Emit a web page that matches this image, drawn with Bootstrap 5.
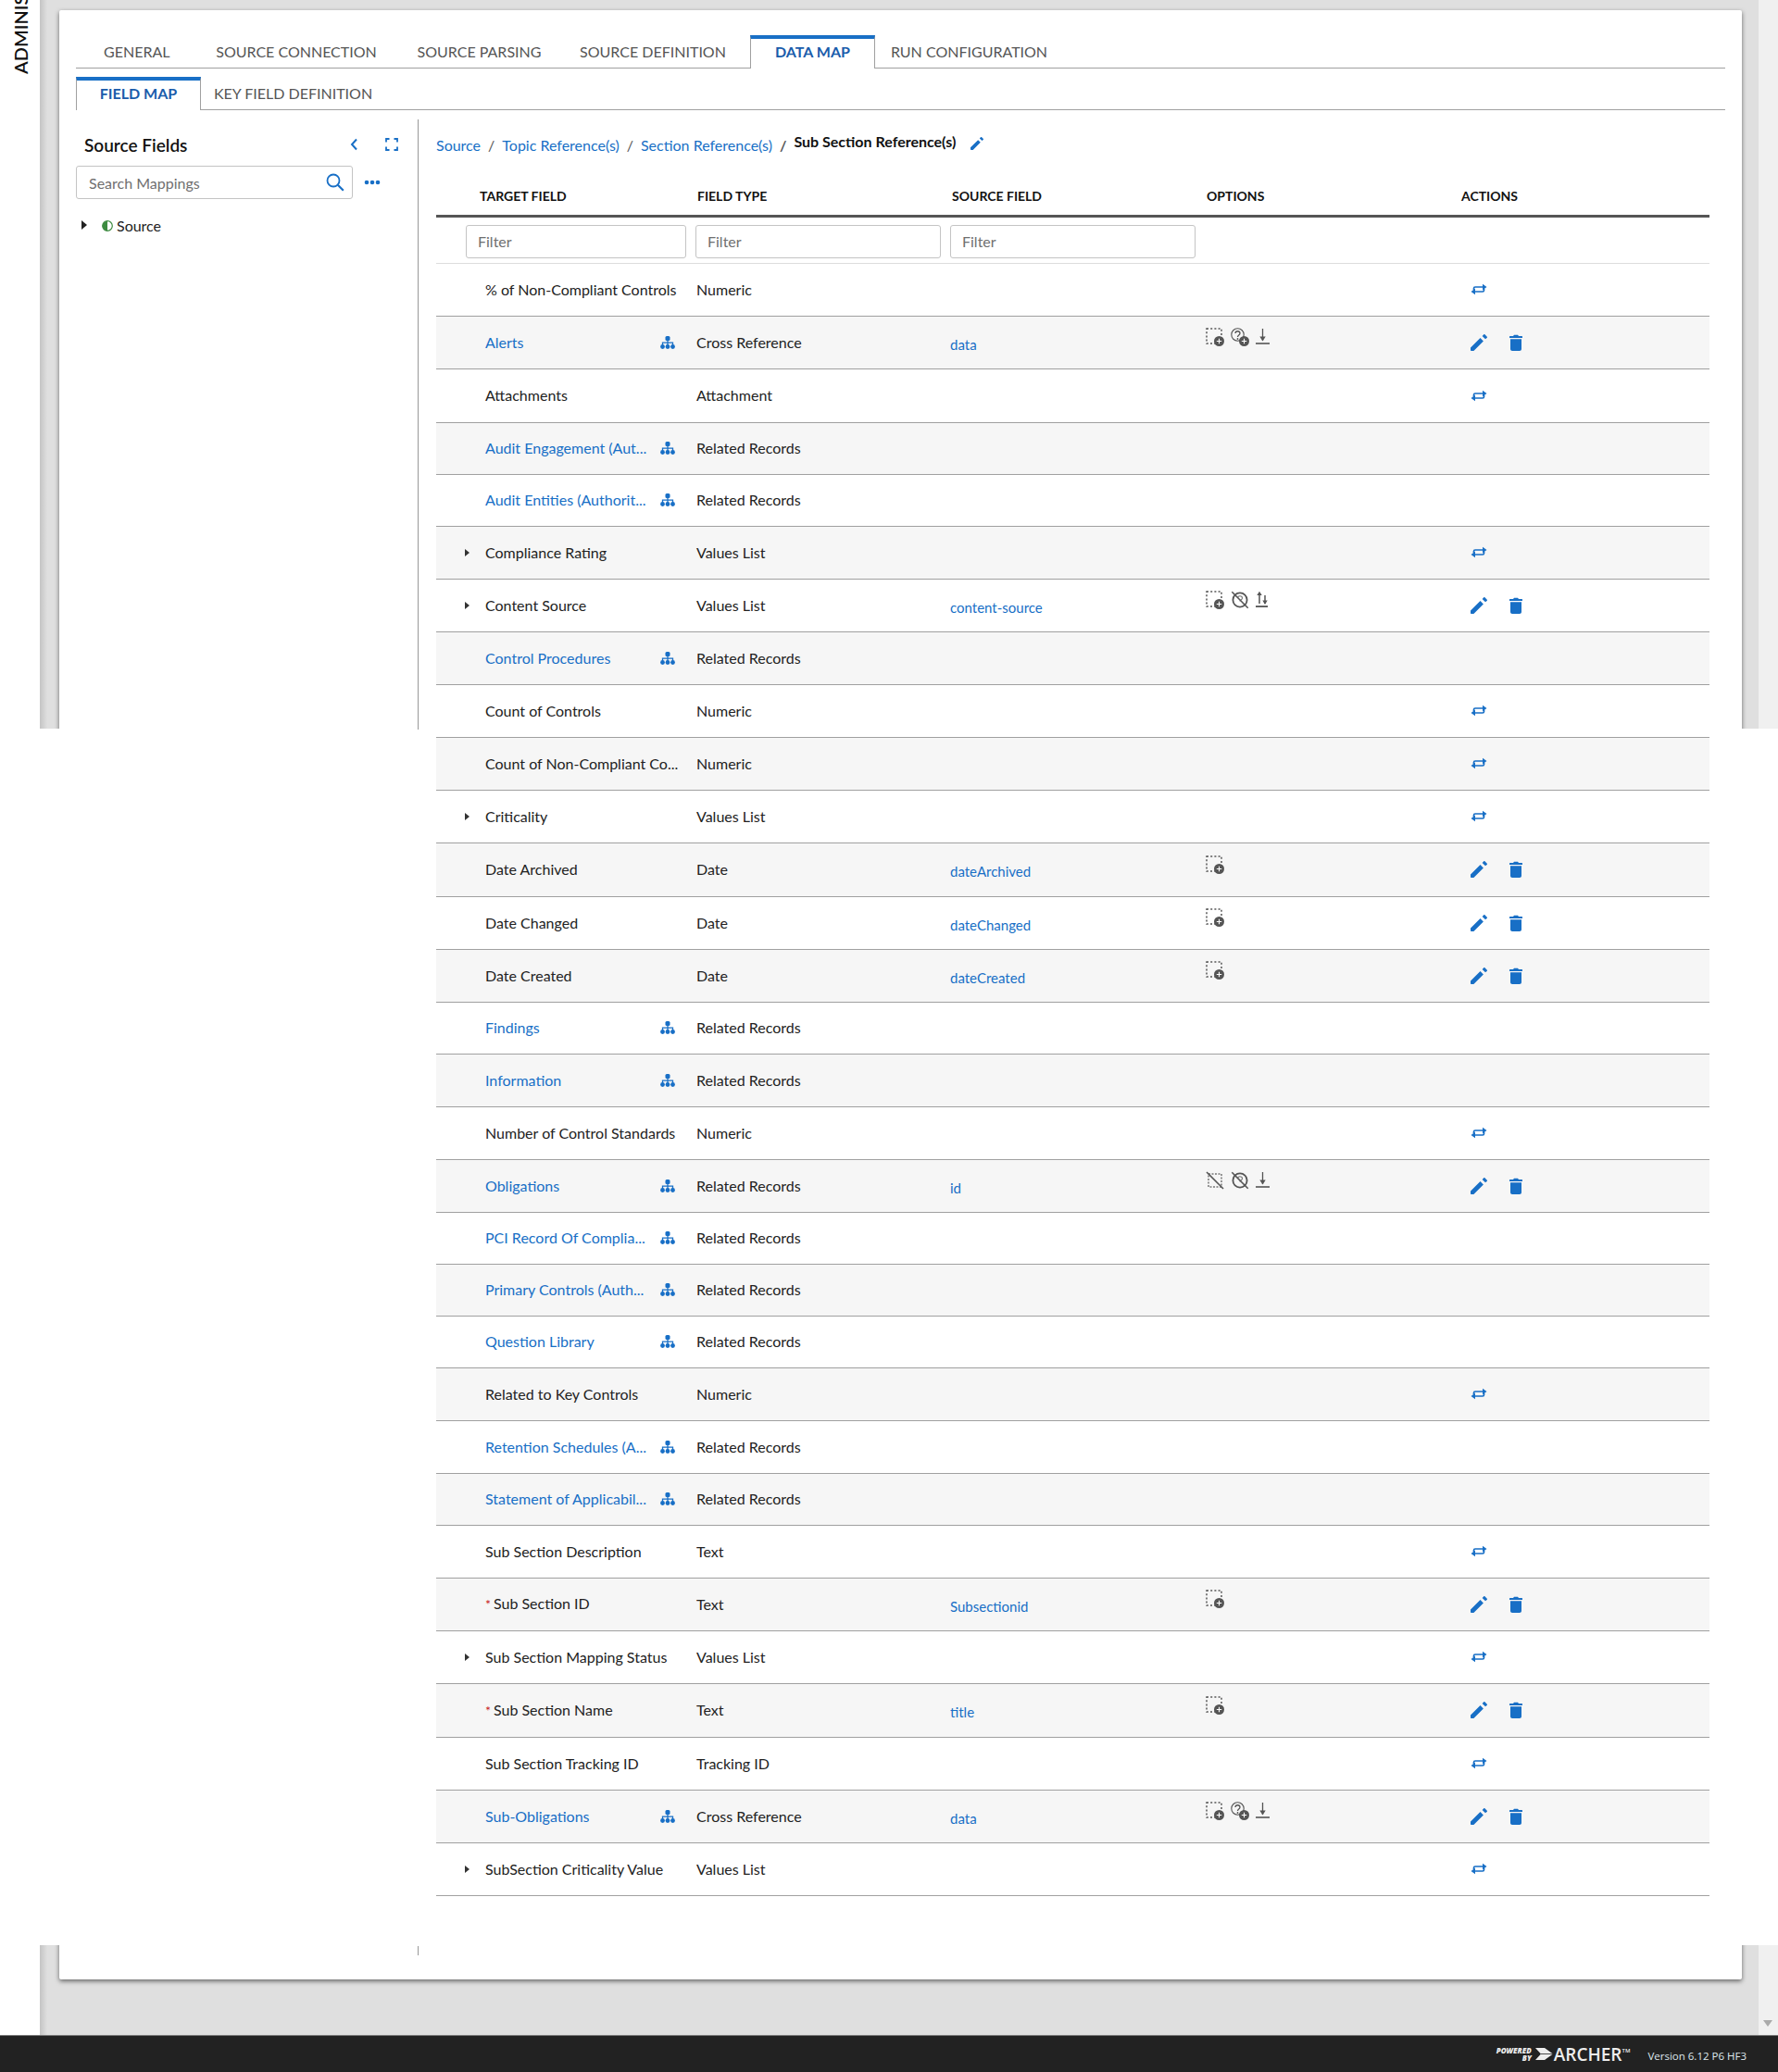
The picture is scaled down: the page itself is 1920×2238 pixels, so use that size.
<!DOCTYPE html>
<html lang="en">
<head>
<meta charset="utf-8">
<title>Data Map</title>
<link href="https://cdn.jsdelivr.net/npm/bootstrap@5.3.0/dist/css/bootstrap.min.css" rel="stylesheet">
<script src="https://cdn.jsdelivr.net/npm/bootstrap@5.3.0/dist/js/bootstrap.bundle.min.js"></script>
<style>
:root{--blue:#186fc6;--line:#a0a0a0;}
html,body{height:2238px;overflow:hidden;}
body{font-family:Lato,"Liberation Sans",sans-serif;font-size:16px;color:#222;background:#fff;}
.app-shell{height:2198px;}
.rail{width:43px;background:#fff;overflow:hidden;flex:none;}
.rail-label{height:80px;writing-mode:vertical-rl;transform:rotate(180deg);white-space:nowrap;font-size:20px;font-weight:600;color:#111;line-height:44px;width:44px;}
.stage{flex:1;min-width:0;padding:11px 18px 60px 21px;
 background:linear-gradient(#fff,#fff) 0 787px/100% 1314px no-repeat,
 linear-gradient(90deg,#c4c4c4,#dfdfdf) 0 0/8px 100% no-repeat,#dfdfdf;}
.gutter{width:21px;flex:none;padding:0 0 9px 5px;
 background:linear-gradient(#fff,#fff) 0 787px/100% 1314px no-repeat,#f0f0f0;}
.gutter-arrow{width:0;height:0;border:5px solid transparent;border-top:7px solid #aaa;border-bottom:0;}
.sheet{height:2127px;background:#fff;padding:27px 18px 0;border-radius:2px;
 box-shadow:0 2px 5px rgba(0,0,0,.55);
 clip-path:polygon(-20px -20px,calc(100% + 20px) -20px,calc(100% + 20px) 776px,100% 776px,100% 2090px,calc(100% + 20px) 2090px,calc(100% + 20px) calc(100% + 20px),-20px calc(100% + 20px),-20px 2090px,0 2090px,0 776px,-20px 776px);}
.tabs-a,.tabs-b{border-bottom:1px solid var(--line);--bs-nav-tabs-border-width:0;flex-wrap:nowrap;}
.tabs-a{height:36px;}
.tabs-b{height:36px;margin-top:9px;}
.tab-x{font-size:16px;height:35px;line-height:35px;white-space:nowrap;text-align:center;display:block;}
.tabs-a .nav-link,.tabs-b .nav-link{color:#555;border:0;margin:0;border-radius:0;padding:0;}
.tabs-a .nav-link.active,.tabs-b .nav-link.active{color:#1a5cab;font-weight:700;border-top:4px solid var(--blue);border-left:1px solid var(--line);border-right:1px solid var(--line);background:#fff;height:36px;margin-bottom:-1px;line-height:27px;padding:0;}
.tabs-a .nav-link.t1{width:127px;padding-left:30px;text-align:left;}
.tabs-a .nav-link.t2{width:219px;padding-left:3px;}
.tabs-a .nav-link.t3{width:177px;padding-left:2px;}
.tabs-a .nav-link.t4{width:205px;padding-right:5px;}
.t5{width:135px;}
.tabs-a .nav-link.t6{width:215px;padding-right:12px;}
.wb1{width:135px;}
.tabs-b .nav-link.wb2{width:200px;padding-left:14px;text-align:left;}
.panes{margin-top:10px;height:1983px;}
.pane-l{width:370px;flex:none;padding-right:26px;
 background:linear-gradient(#999,#999) 100% 0/1px 659px no-repeat,linear-gradient(#999,#999) 100% 1973px/1px 10px no-repeat;}
.pane-r{flex:1;min-width:0;padding:0 18px 0 19px;}
.pane-head{height:50px;padding:16px 0 0 9px;}
.pane-title{font-size:19px;font-weight:600;color:#111;line-height:24px;}
.head-tools{gap:30px;margin-right:-4px;}
.search-row{gap:12px;}
.search-wrap{width:299px;}
.search-wrap .form-control{height:36px;border-color:#c4c4c4;border-radius:3px;font-size:16px;padding:0 13px;color:#222;}
.search-wrap .form-control::placeholder,.filter-input::placeholder{color:#6f6f6f;opacity:1;}
.search-glass{position:absolute;right:9px;top:8px;}
.tree-row{margin-top:17px;padding-left:6px;height:24px;}
.caret-tree{width:0;height:0;border-left:6px solid #222;border-top:5px solid transparent;border-bottom:5px solid transparent;margin-top:-2px;}
.crumbs{height:62px;padding-top:16px;line-height:24px;--bs-breadcrumb-divider-color:#555;--bs-breadcrumb-margin-bottom:0;--bs-breadcrumb-item-padding-x:8px;font-size:16px;margin:0;flex-wrap:nowrap;white-space:nowrap;}
.crumbs .breadcrumb-item a{color:var(--blue);text-decoration:none;}
.crumbs .breadcrumb-item.active{color:#111;font-weight:700;margin-top:-4px;}
.crumbs .breadcrumb-item.active::before{margin-top:4px;}
.fm-table{table-layout:fixed;width:1375px;margin:0;border-collapse:collapse;--bs-table-bg:transparent;}
.fm-table col.c1{width:276px}.fm-table col.c2,.fm-table col.c3,.fm-table col.c4{width:275px}.fm-table col.c5{width:274px}
.fm-table th{height:42px;font-size:14px;font-weight:700;color:#111;padding:0 0 0 6px;vertical-align:middle;border-bottom:3px solid #555;text-transform:uppercase;}
.fm-table th:first-child{padding-left:47px;}
.fm-table .filter-row td{height:51px;padding:0 6px 0 4px;border-bottom:1px solid #ddd;vertical-align:top;}
.fm-table .filter-row td:first-child{padding-left:32px;}
.filter-input{height:36px;margin-top:8px;border-color:#c4c4c4;border-radius:3px;font-size:16px;padding:0 12px;}
.fm-table tbody.rows td{height:57px;padding:0 0 0 5px;vertical-align:middle;border-bottom:1px solid var(--line);font-size:16px;color:#222;line-height:20px;box-shadow:none;}
.fm-table tbody.rows tr:nth-child(even) td{background:#f6f6f6;}
.fm-table tbody.rows tr.h56 td{height:56px;}
.fm-table tbody.rows tr.h58 td{height:58px;}
.fm-table tbody.rows td.t-cell{padding:0 18px 0 53px;position:relative;white-space:nowrap;}
.fm-table tbody.rows td.s-cell{padding:4px 0 0 4px;font-size:15px;}
.fm-table tbody.rows td.o-cell{padding:0 0 11px 5px;}
.fm-table tbody.rows td.a-cell{padding-left:16px;}
.a-cell>svg{display:block;}
.fm-link{color:var(--blue);text-decoration:none;}
.t-inner{display:flex;align-items:center;justify-content:space-between;white-space:nowrap;}
.caret-mark{width:0;height:0;border-left:5px solid #333;border-top:4px solid transparent;border-bottom:4px solid transparent;position:absolute;left:31px;top:50%;margin-top:-4px;}
.req-mark{color:#c8201f;font-size:14px;margin-right:3px;}
.opt-row{gap:7px;align-items:center;line-height:0;}
.act-row{gap:24px;align-items:center;line-height:0;}
.foot{height:40px;background:#222;color:#dfe8ee;padding-right:34px;border-top:1px solid #777;}
.powered{font-size:8px;line-height:7.5px;font-style:italic;font-weight:800;text-align:right;color:#eee;font-family:"Open Sans",sans-serif;}
.brand{font-size:19px;font-weight:600;color:#eee;font-family:"Open Sans",sans-serif;line-height:24px;margin:0 19px 0 1px;}
.brand sup{font-size:6px;top:-1.5em;}
.ver{font-family:"Open Sans",sans-serif;font-size:11.500px;padding-top:5px;}
</style>
</head>
<body>
<svg width="0" height="0" class="d-block" aria-hidden="true" style="position:absolute">
 <defs>
  <symbol id="i-pen" viewBox="0 0 18 18"><path fill="#186fc6" d="M0 14.6V17c0 .6.4 1 1 1h2.4L13.9 7.5 10.5 4.1 0 14.6zM17.6 3.9c.5-.4.5-1 0-1.500L15.600.4c-.5-.5-1.100-.5-1.500 0l-1.500 1.500 3.400 3.400 1.600-1.400z"/></symbol>
  <symbol id="i-bin" viewBox="0 0 14 18"><path fill="#186fc6" d="M5 .7h4l1 1.300h3.500c.3 0 .5.2.5.5V4H0V2.500c0-.3.2-.5.5-.5H4zM1 5.200h12V16c0 1.100-.9 2-2 2H3c-1.100 0-2-.9-2-2z"/></symbol>
  <symbol id="i-swap" viewBox="0 0 18 13"><g fill="none" stroke="#186fc6" stroke-width="1.700"><path d="M3.500 7.300V5.500Q3.500 4 5 4H14"/><path d="M14.500 5.700V7.500Q14.500 9 13 9H4"/></g><path fill="#186fc6" d="M13 .8 17.500 4 13 7.200zM5 5.800.5 9 5 12.200z"/></symbol>
  <symbol id="i-tree" viewBox="0 0 16 14"><g fill="#186fc6"><rect x="5.500" y="0" width="5" height="5" rx="1.500"/><circle cx="2.500" cy="11.500" r="2.400"/><circle cx="8" cy="11.500" r="2.400"/><circle cx="13.500" cy="11.500" r="2.400"/></g><path fill="none" stroke="#186fc6" stroke-width="1.300" d="M8 4v6M2.500 10V7.200h11V10"/></symbol>
  <symbol id="o-box" viewBox="0 0 20 20"><rect x="1" y="1" width="16" height="16" fill="none" stroke="#555" stroke-width="1.500" stroke-dasharray="2 2.200"/><circle cx="14.500" cy="14.500" r="5.500" fill="#555"/><path stroke="#fff" stroke-width="1.100" d="M14.500 11.800v5.400M11.800 14.500h5.400"/></symbol>
  <symbol id="o-q" viewBox="0 0 20 20"><circle cx="7.500" cy="7.500" r="6.700" fill="none" stroke="#555" stroke-width="1.100"/><path fill="none" stroke="#555" stroke-width="1.300" d="M5 6c0-3 5-3 5 0 0 2-2.500 2-2.500 4"/><circle cx="7.500" cy="12" r=".9" fill="#555"/><circle cx="14.500" cy="14.500" r="5.500" fill="#555"/><path stroke="#fff" stroke-width="1.100" d="M14.500 11.800v5.400M11.800 14.500h5.400"/></symbol>
  <symbol id="o-qx" viewBox="0 0 20 20"><circle cx="10" cy="10" r="7.600" fill="none" stroke="#555" stroke-width="1.800"/><path fill="none" stroke="#777" stroke-width="1.100" d="M7.500 8c0-3 5-3 5 0 0 1.800-2.500 1.800-2.500 3.500"/><path stroke="#555" stroke-width="1.600" d="M1.300 1.300 18.700 18.700"/></symbol>
  <symbol id="o-boxx" viewBox="0 0 20 20"><rect x="3" y="3" width="14" height="14" fill="none" stroke="#777" stroke-width="1.500" stroke-dasharray="2 1.500"/><path stroke="#555" stroke-width="1.600" d="M1 1 19 19"/></symbol>
  <symbol id="o-down" viewBox="1.500 0 18 20"><path stroke="#555" stroke-width="1.300" d="M9 1v13"/><path fill="#555" d="M5.800 9.500h6.400L9 14.500z"/><rect x="1.500" y="16.200" width="15" height="1.600" fill="#555"/></symbol>
  <symbol id="o-sync" viewBox="1.500 0 18 20"><path stroke="#555" stroke-width="1.500" d="M5.500 3v11M11.500 5v9"/><path fill="#555" d="M2.800 5 5.500.8 8.200 5zM8.800 10.500h5.400L11.500 15z"/><rect x="1.500" y="16.200" width="13" height="1.800" fill="#555"/></symbol>
 </defs>
</svg>

<div class="app-shell d-flex">
 <div class="rail"><div class="rail-label">ADMINISTRATION</div></div>
 <main class="stage">
  <div class="sheet">
   <ul class="nav nav-tabs tabs-a">
    <li class="nav-item"><a class="nav-link tab-x t1" href="#">GENERAL</a></li>
    <li class="nav-item"><a class="nav-link tab-x t2" href="#">SOURCE CONNECTION</a></li>
    <li class="nav-item"><a class="nav-link tab-x t3" href="#">SOURCE PARSING</a></li>
    <li class="nav-item"><a class="nav-link tab-x t4" href="#">SOURCE DEFINITION</a></li>
    <li class="nav-item"><a class="nav-link tab-x t5 active" href="#">DATA MAP</a></li>
    <li class="nav-item"><a class="nav-link tab-x t6" href="#">RUN CONFIGURATION</a></li>
   </ul>
   <ul class="nav nav-tabs tabs-b">
    <li class="nav-item"><a class="nav-link tab-x wb1 active" href="#">FIELD MAP</a></li>
    <li class="nav-item"><a class="nav-link tab-x wb2" href="#">KEY FIELD DEFINITION</a></li>
   </ul>
   <div class="panes d-flex">
    <aside class="pane-l">
     <div class="pane-head d-flex justify-content-between align-items-start">
      <span class="pane-title">Source Fields</span>
      <span class="d-flex align-items-center head-tools pt-1">
       <svg width="8" height="14" viewBox="0 0 8 14"><path fill="none" stroke="#186fc6" stroke-width="2" d="M7 1.500 2 7l5 5.500"/></svg>
       <svg width="14" height="14" viewBox="0 0 14 14"><path fill="none" stroke="#186fc6" stroke-width="1.800" d="M1 4.500V1h3.500M9.500 1H13v3.500M13 9.500V13H9.500M4.500 13H1V9.500"/></svg>
      </span>
     </div>
     <div class="search-row d-flex align-items-center">
      <div class="search-wrap position-relative">
       <input class="form-control" type="text" placeholder="Search Mappings">
       <svg class="search-glass" width="20" height="20" viewBox="0 0 20 20"><circle cx="8" cy="8" r="6.500" fill="none" stroke="#186fc6" stroke-width="1.800"/><path stroke="#186fc6" stroke-width="2.200" d="m12.800 12.800 6 6"/></svg>
      </div>
      <svg width="18" height="6" viewBox="0 0 18 6"><g fill="#186fc6"><circle cx="3" cy="3" r="2.300"/><circle cx="9" cy="3" r="2.300"/><circle cx="15" cy="3" r="2.300"/></g></svg>
     </div>
     <div class="tree-row d-flex align-items-center">
      <span class="caret-tree me-3"></span>
      <svg width="12" height="12" viewBox="0 0 12 12" class="me-1"><circle cx="6" cy="6" r="5.300" fill="#fff" stroke="#3d8b40" stroke-width="1.200"/><path fill="#3d8b40" d="M6 .7a5.300 5.300 0 0 0 0 10.600z"/></svg>
      <span>Source</span>
     </div>
    </aside>
    <section class="pane-r">
     <ol class="breadcrumb crumbs">
      <li class="breadcrumb-item"><a href="#">Source</a></li>
      <li class="breadcrumb-item"><a href="#">Topic Reference(s)</a></li>
      <li class="breadcrumb-item"><a href="#">Section Reference(s)</a></li>
      <li class="breadcrumb-item active">Sub Section Reference(s)<svg class="ms-3" width="14" height="14"><use href="#i-pen"/></svg></li>
     </ol>
     <table class="table fm-table">
      <colgroup><col class="c1"><col class="c2"><col class="c3"><col class="c4"><col class="c5"></colgroup>
      <thead>
       <tr><th>Target Field</th><th>Field Type</th><th>Source Field</th><th>Options</th><th>Actions</th></tr>
      </thead>
      <tbody>
       <tr class="filter-row">
        <td><input class="form-control filter-input" placeholder="Filter"></td>
        <td><input class="form-control filter-input" placeholder="Filter"></td>
        <td><input class="form-control filter-input" placeholder="Filter"></td>
        <td></td><td></td>
       </tr>
      </tbody>
      <tbody class="rows">
       <tr><td class="t-cell">% of Non-Compliant Controls</td><td>Numeric</td><td></td><td></td><td class="a-cell"><svg width="18" height="13"><use href="#i-swap"/></svg></td></tr>
       <tr><td class="t-cell"><div class="t-inner"><a class="fm-link" href="#">Alerts</a><svg width="16" height="14"><use href="#i-tree"/></svg></div></td><td>Cross Reference</td><td class="s-cell"><a class="fm-link" href="#">data</a></td><td class="o-cell"><div class="d-flex opt-row"><svg width="20" height="20"><use href="#o-box"/></svg><svg width="20" height="20"><use href="#o-q"/></svg><svg width="18" height="20"><use href="#o-down"/></svg></div></td><td class="a-cell"><div class="d-flex act-row"><svg width="18" height="18"><use href="#i-pen"/></svg><svg width="14" height="18"><use href="#i-bin"/></svg></div></td></tr>
       <tr class="h58"><td class="t-cell">Attachments</td><td>Attachment</td><td></td><td></td><td class="a-cell"><svg width="18" height="13"><use href="#i-swap"/></svg></td></tr>
       <tr class="h56"><td class="t-cell"><div class="t-inner"><a class="fm-link" href="#">Audit Engagement (Aut...</a><svg width="16" height="14"><use href="#i-tree"/></svg></div></td><td>Related Records</td><td></td><td></td><td></td></tr>
       <tr class="h56"><td class="t-cell"><div class="t-inner"><a class="fm-link" href="#">Audit Entities (Authorit...</a><svg width="16" height="14"><use href="#i-tree"/></svg></div></td><td>Related Records</td><td></td><td></td><td></td></tr>
       <tr><td class="t-cell"><span class="caret-mark"></span>Compliance Rating</td><td>Values List</td><td></td><td></td><td class="a-cell"><svg width="18" height="13"><use href="#i-swap"/></svg></td></tr>
       <tr><td class="t-cell"><span class="caret-mark"></span>Content Source</td><td>Values List</td><td class="s-cell"><a class="fm-link" href="#">content-source</a></td><td class="o-cell"><div class="d-flex opt-row"><svg width="20" height="20"><use href="#o-box"/></svg><svg width="20" height="20"><use href="#o-qx"/></svg><svg width="18" height="20"><use href="#o-sync"/></svg></div></td><td class="a-cell"><div class="d-flex act-row"><svg width="18" height="18"><use href="#i-pen"/></svg><svg width="14" height="18"><use href="#i-bin"/></svg></div></td></tr>
       <tr><td class="t-cell"><div class="t-inner"><a class="fm-link" href="#">Control Procedures</a><svg width="16" height="14"><use href="#i-tree"/></svg></div></td><td>Related Records</td><td></td><td></td><td></td></tr>
       <tr><td class="t-cell">Count of Controls</td><td>Numeric</td><td></td><td></td><td class="a-cell"><svg width="18" height="13"><use href="#i-swap"/></svg></td></tr>
       <tr><td class="t-cell">Count of Non-Compliant Co...</td><td>Numeric</td><td></td><td></td><td class="a-cell"><svg width="18" height="13"><use href="#i-swap"/></svg></td></tr>
       <tr><td class="t-cell"><span class="caret-mark"></span>Criticality</td><td>Values List</td><td></td><td></td><td class="a-cell"><svg width="18" height="13"><use href="#i-swap"/></svg></td></tr>
       <tr class="h58"><td class="t-cell">Date Archived</td><td>Date</td><td class="s-cell"><a class="fm-link" href="#">dateArchived</a></td><td class="o-cell"><div class="d-flex opt-row"><svg width="20" height="20"><use href="#o-box"/></svg></div></td><td class="a-cell"><div class="d-flex act-row"><svg width="18" height="18"><use href="#i-pen"/></svg><svg width="14" height="18"><use href="#i-bin"/></svg></div></td></tr>
       <tr><td class="t-cell">Date Changed</td><td>Date</td><td class="s-cell"><a class="fm-link" href="#">dateChanged</a></td><td class="o-cell"><div class="d-flex opt-row"><svg width="20" height="20"><use href="#o-box"/></svg></div></td><td class="a-cell"><div class="d-flex act-row"><svg width="18" height="18"><use href="#i-pen"/></svg><svg width="14" height="18"><use href="#i-bin"/></svg></div></td></tr>
       <tr><td class="t-cell">Date Created</td><td>Date</td><td class="s-cell"><a class="fm-link" href="#">dateCreated</a></td><td class="o-cell"><div class="d-flex opt-row"><svg width="20" height="20"><use href="#o-box"/></svg></div></td><td class="a-cell"><div class="d-flex act-row"><svg width="18" height="18"><use href="#i-pen"/></svg><svg width="14" height="18"><use href="#i-bin"/></svg></div></td></tr>
       <tr class="h56"><td class="t-cell"><div class="t-inner"><a class="fm-link" href="#">Findings</a><svg width="16" height="14"><use href="#i-tree"/></svg></div></td><td>Related Records</td><td></td><td></td><td></td></tr>
       <tr><td class="t-cell"><div class="t-inner"><a class="fm-link" href="#">Information</a><svg width="16" height="14"><use href="#i-tree"/></svg></div></td><td>Related Records</td><td></td><td></td><td></td></tr>
       <tr><td class="t-cell">Number of Control Standards</td><td>Numeric</td><td></td><td></td><td class="a-cell"><svg width="18" height="13"><use href="#i-swap"/></svg></td></tr>
       <tr><td class="t-cell"><div class="t-inner"><a class="fm-link" href="#">Obligations</a><svg width="16" height="14"><use href="#i-tree"/></svg></div></td><td>Related Records</td><td class="s-cell"><a class="fm-link" href="#">id</a></td><td class="o-cell"><div class="d-flex opt-row"><svg width="20" height="20"><use href="#o-boxx"/></svg><svg width="20" height="20"><use href="#o-qx"/></svg><svg width="18" height="20"><use href="#o-down"/></svg></div></td><td class="a-cell"><div class="d-flex act-row"><svg width="18" height="18"><use href="#i-pen"/></svg><svg width="14" height="18"><use href="#i-bin"/></svg></div></td></tr>
       <tr class="h56"><td class="t-cell"><div class="t-inner"><a class="fm-link" href="#">PCI Record Of Complia...</a><svg width="16" height="14"><use href="#i-tree"/></svg></div></td><td>Related Records</td><td></td><td></td><td></td></tr>
       <tr class="h56"><td class="t-cell"><div class="t-inner"><a class="fm-link" href="#">Primary Controls (Auth...</a><svg width="16" height="14"><use href="#i-tree"/></svg></div></td><td>Related Records</td><td></td><td></td><td></td></tr>
       <tr class="h56"><td class="t-cell"><div class="t-inner"><a class="fm-link" href="#">Question Library</a><svg width="16" height="14"><use href="#i-tree"/></svg></div></td><td>Related Records</td><td></td><td></td><td></td></tr>
       <tr><td class="t-cell">Related to Key Controls</td><td>Numeric</td><td></td><td></td><td class="a-cell"><svg width="18" height="13"><use href="#i-swap"/></svg></td></tr>
       <tr><td class="t-cell"><div class="t-inner"><a class="fm-link" href="#">Retention Schedules (A...</a><svg width="16" height="14"><use href="#i-tree"/></svg></div></td><td>Related Records</td><td></td><td></td><td></td></tr>
       <tr class="h56"><td class="t-cell"><div class="t-inner"><a class="fm-link" href="#">Statement of Applicabil...</a><svg width="16" height="14"><use href="#i-tree"/></svg></div></td><td>Related Records</td><td></td><td></td><td></td></tr>
       <tr><td class="t-cell">Sub Section Description</td><td>Text</td><td></td><td></td><td class="a-cell"><svg width="18" height="13"><use href="#i-swap"/></svg></td></tr>
       <tr><td class="t-cell"><span class="req-mark">*</span>Sub Section ID</td><td>Text</td><td class="s-cell"><a class="fm-link" href="#">Subsectionid</a></td><td class="o-cell"><div class="d-flex opt-row"><svg width="20" height="20"><use href="#o-box"/></svg></div></td><td class="a-cell"><div class="d-flex act-row"><svg width="18" height="18"><use href="#i-pen"/></svg><svg width="14" height="18"><use href="#i-bin"/></svg></div></td></tr>
       <tr><td class="t-cell"><span class="caret-mark"></span>Sub Section Mapping Status</td><td>Values List</td><td></td><td></td><td class="a-cell"><svg width="18" height="13"><use href="#i-swap"/></svg></td></tr>
       <tr class="h58"><td class="t-cell"><span class="req-mark">*</span>Sub Section Name</td><td>Text</td><td class="s-cell"><a class="fm-link" href="#">title</a></td><td class="o-cell"><div class="d-flex opt-row"><svg width="20" height="20"><use href="#o-box"/></svg></div></td><td class="a-cell"><div class="d-flex act-row"><svg width="18" height="18"><use href="#i-pen"/></svg><svg width="14" height="18"><use href="#i-bin"/></svg></div></td></tr>
       <tr><td class="t-cell">Sub Section Tracking ID</td><td>Tracking ID</td><td></td><td></td><td class="a-cell"><svg width="18" height="13"><use href="#i-swap"/></svg></td></tr>
       <tr><td class="t-cell"><div class="t-inner"><a class="fm-link" href="#">Sub-Obligations</a><svg width="16" height="14"><use href="#i-tree"/></svg></div></td><td>Cross Reference</td><td class="s-cell"><a class="fm-link" href="#">data</a></td><td class="o-cell"><div class="d-flex opt-row"><svg width="20" height="20"><use href="#o-box"/></svg><svg width="20" height="20"><use href="#o-q"/></svg><svg width="18" height="20"><use href="#o-down"/></svg></div></td><td class="a-cell"><div class="d-flex act-row"><svg width="18" height="18"><use href="#i-pen"/></svg><svg width="14" height="18"><use href="#i-bin"/></svg></div></td></tr>
       <tr><td class="t-cell"><span class="caret-mark"></span>SubSection Criticality Value</td><td>Values List</td><td></td><td></td><td class="a-cell"><svg width="18" height="13"><use href="#i-swap"/></svg></td></tr>
      </tbody>
     </table>
    </section>
   </div>
  </div>
 </main>
 <div class="gutter d-flex align-items-end"><div class="gutter-arrow"></div></div>
</div>
<footer class="foot d-flex align-items-center justify-content-end">
 <div class="powered">POWERED<br>BY</div>
 <svg class="ms-1" width="19" height="13" viewBox="0 0 19 13"><path fill="#eee" d="M0 0h10l9 6.500-9 6.500H0l6-6.500z"/><path stroke="#222" stroke-width=".8" d="M6 6.500h13"/></svg>
 <div class="brand">ARCHER<sup>TM</sup></div>
 <div class="ver">Version 6.12 P6 HF3</div>
</footer>
</body>
</html>
